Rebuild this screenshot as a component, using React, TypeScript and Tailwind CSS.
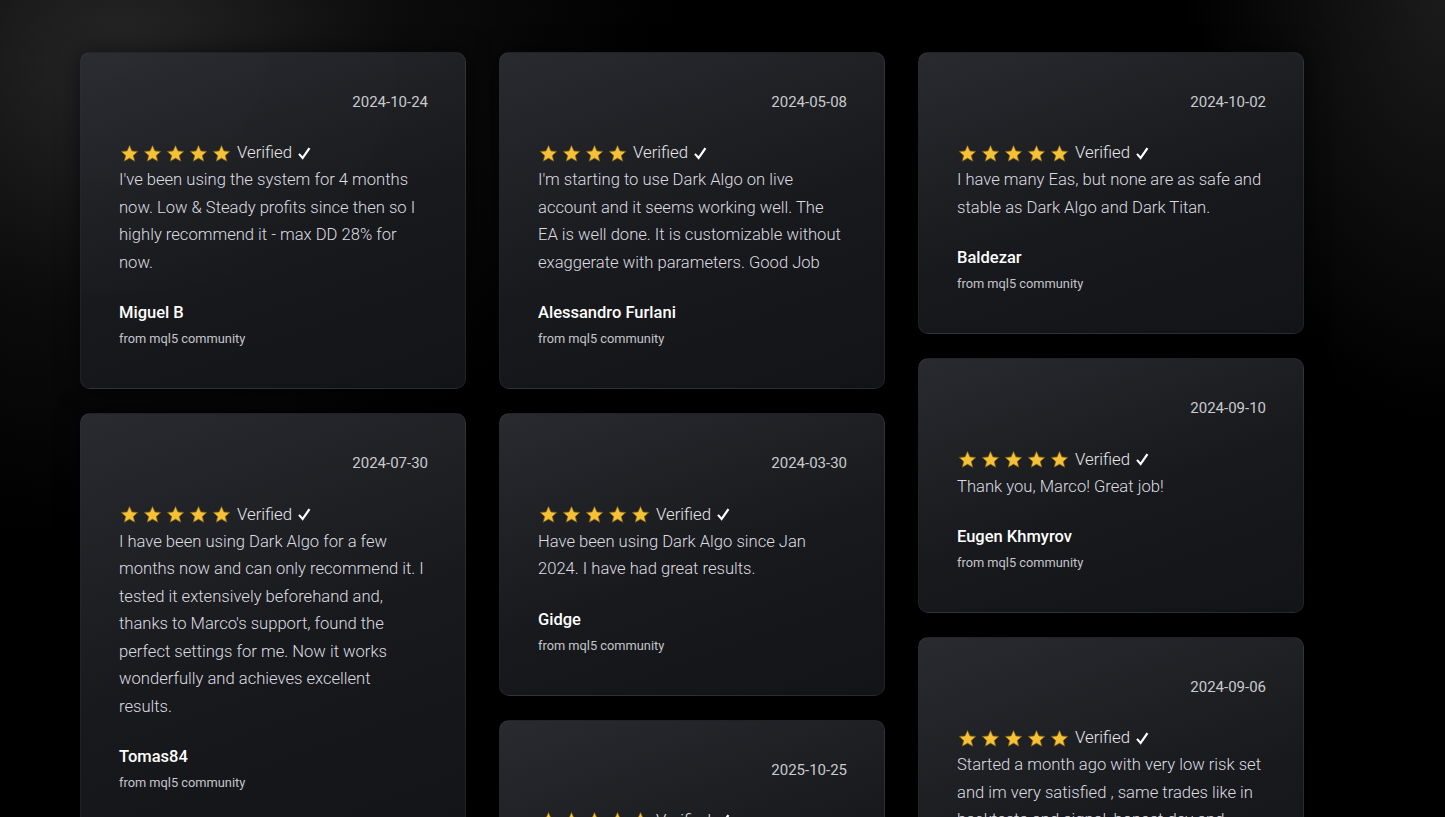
import React from "react";

type Review = {
  date: string;
  stars: number;
  text: string;
  name: string;
};

const columns: Review[][] = [
  [
    {
      date: "2024-10-24",
      stars: 5,
      text: "I've been using the system for 4 months now. Low & Steady profits since then so I highly recommend it - max DD 28% for now.",
      name: "Miguel B",
    },
    {
      date: "2024-07-30",
      stars: 5,
      text: "I have been using Dark Algo for a few months now and can only recommend it. I tested it extensively beforehand and, thanks to Marco's support, found the perfect settings for me. Now it works wonderfully and achieves excellent results.",
      name: "Tomas84",
    },
  ],
  [
    {
      date: "2024-05-08",
      stars: 4,
      text: "I'm starting to use Dark Algo on live account and it seems working well. The EA is well done. It is customizable without exaggerate with parameters. Good Job",
      name: "Alessandro Furlani",
    },
    {
      date: "2024-03-30",
      stars: 5,
      text: "Have been using Dark Algo since Jan 2024. I have had great results.",
      name: "Gidge",
    },
    {
      date: "2025-10-25",
      stars: 5,
      text: "Very stable results so far, the support is fast and helpful. Recommended.",
      name: "Trader",
    },
  ],
  [
    {
      date: "2024-10-02",
      stars: 5,
      text: "I have many Eas, but none are as safe and stable as Dark Algo and Dark Titan.",
      name: "Baldezar",
    },
    {
      date: "2024-09-10",
      stars: 5,
      text: "Thank you, Marco! Great job!",
      name: "Eugen Khmyrov",
    },
    {
      date: "2024-09-06",
      stars: 5,
      text: "Started a month ago with very low risk set and im very satisfied , same trades like in backtests and signal, honest dev and good support.",
      name: "Sergey",
    },
  ],
];

function Star() {
  return (
    <svg width="19" height="19" viewBox="0 0 24 24" className="shrink-0">
      <path
        d="M12 1.8l3.1 6.9 7.4.7-5.6 5 1.7 7.4L12 17.9l-6.6 3.9 1.7-7.4-5.6-5 7.4-.7z"
        fill="#f5c237"
        stroke="#7a5a12"
        strokeWidth="0.9"
        strokeLinejoin="round"
      />
    </svg>
  );
}

function Check() {
  return (
    <svg width="14" height="15" viewBox="0 0 14 15" className="ml-[5px] shrink-0">
      <path d="M1.2 8.6 L2.7 7.2 L5.5 10.2 L11.5 1.4 L13.4 2.7 L5.7 13.8 Z" fill="#ffffff" />
    </svg>
  );
}

function ReviewCard({ r }: { r: Review }) {
  return (
    <div className="rounded-[10px] border border-white/[0.05] bg-[linear-gradient(160deg,rgba(44,46,51,0.92)_0%,rgba(26,27,31,0.92)_55%,rgba(20,21,25,0.95)_100%)] pl-[38px] pr-[40px] pt-[39px] pb-[40px] shadow-[0_0_24px_rgba(0,0,0,0.6)]">
      <div className="-mr-[3px] text-right text-[15px] leading-[20px] text-[#c9cace]">{r.date}</div>
      <div className="mt-[29px] flex h-[24px] items-center">
        <div className="flex items-center gap-[4px] pl-[1px]">
          {Array.from({ length: r.stars }).map((_, i) => (
            <Star key={i} />
          ))}
        </div>
        <span className="ml-[6px] flex items-center text-[16.8px] font-light text-[#e6e6e9]">
          Verified
          <Check />
        </span>
      </div>
      <p className="mt-[1.25px] text-[16.6px] font-light leading-[27.5px] text-[#dcdce0]">{r.text}</p>
      <div className="mt-[25px] text-[16.5px] font-medium leading-[24px] text-white">{r.name}</div>
      <div className="mt-[5px] text-[12.8px] leading-[18px] text-[#c4c5ca]">from mql5 community</div>
    </div>
  );
}

export default function App() {
  return (
    <div
      className="h-[817px] overflow-hidden bg-black bg-[radial-gradient(ellipse_560px_480px_at_120px_60px,#262626_0%,rgba(20,20,20,0.6)_50%,transparent_100%),radial-gradient(ellipse_260px_420px_at_1445px_0px,#1b1b1b_0%,transparent_100%)]"
      style={{ fontFamily: "Roboto, 'Noto Sans', sans-serif" }}
    >
      <div className="flex gap-[33px] pl-[80px] pt-[52px]">
        {columns.map((col, ci) => (
          <div key={ci} className="flex w-[386px] flex-col gap-[24px]">
            {col.map((r, ri) => (
              <ReviewCard key={ri} r={r} />
            ))}
          </div>
        ))}
      </div>
    </div>
  );
}
